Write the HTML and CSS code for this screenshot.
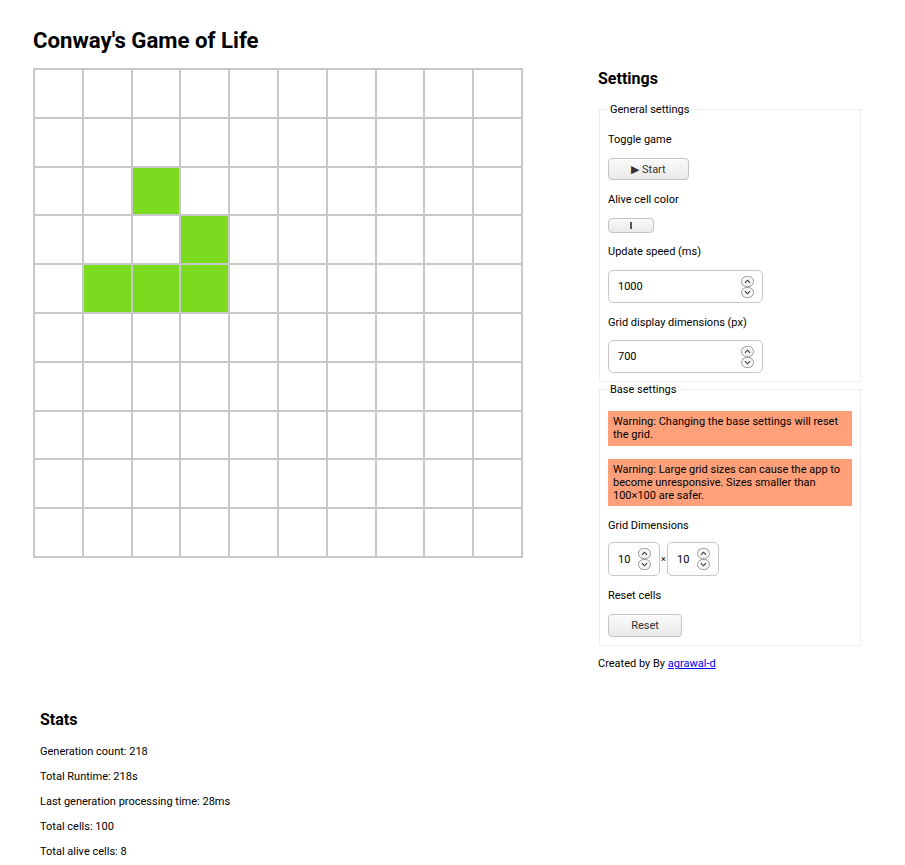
FILE: index.html
```html
<!DOCTYPE html>
<html lang="en">
<head>
<meta charset="utf-8">
<title>Conway's Game of Life</title>
<link rel="stylesheet" href="styles.css">
</head>
<body>
<div class="page">
  <h1 class="title">Conway's Game of Life</h1>
  <div class="main">
    <div class="board" id="board"></div>
    <aside class="settings">
      <h2 class="heading">Settings</h2>
      <fieldset class="group group-general">
        <legend class="legend">General settings</legend>
        <p class="label label-first">Toggle game</p>
        <button class="btn btn-start" type="button">▶ Start</button>
        <p class="label label-color">Alive cell color</p>
        <div class="color-btn"><span class="color-mark"></span></div>
        <p class="label label-speed">Update speed (ms)</p>
        <div class="num num-wide"><span class="num-val">1000</span><span class="spin"><span class="spin-b"><svg viewBox="0 0 8 5" width="7" height="5"><path d="M1 4 L4 1 L7 4" fill="none" stroke="#333" stroke-width="1.2"/></svg></span><span class="spin-b"><svg viewBox="0 0 8 5" width="7" height="5"><path d="M1 1 L4 4 L7 1" fill="none" stroke="#333" stroke-width="1.2"/></svg></span></span></div>
        <p class="label label-display">Grid display dimensions (px)</p>
        <div class="num num-wide"><span class="num-val">700</span><span class="spin"><span class="spin-b"><svg viewBox="0 0 8 5" width="7" height="5"><path d="M1 4 L4 1 L7 4" fill="none" stroke="#333" stroke-width="1.2"/></svg></span><span class="spin-b"><svg viewBox="0 0 8 5" width="7" height="5"><path d="M1 1 L4 4 L7 1" fill="none" stroke="#333" stroke-width="1.2"/></svg></span></span></div>
      </fieldset>
      <fieldset class="group group-base">
        <legend class="legend">Base settings</legend>
        <p class="warning">Warning: Changing the base settings will reset the grid.</p>
        <p class="warning">Warning: Large grid sizes can cause the app to become unresponsive. Sizes smaller than 100×100 are safer.</p>
        <p class="label label-dims">Grid Dimensions</p>
        <div class="dims"><div class="num num-small"><span class="num-val">10</span><span class="spin"><span class="spin-b"><svg viewBox="0 0 8 5" width="7" height="5"><path d="M1 4 L4 1 L7 4" fill="none" stroke="#333" stroke-width="1.2"/></svg></span><span class="spin-b"><svg viewBox="0 0 8 5" width="7" height="5"><path d="M1 1 L4 4 L7 1" fill="none" stroke="#333" stroke-width="1.2"/></svg></span></span></div><span class="times">×</span><div class="num num-small"><span class="num-val">10</span><span class="spin"><span class="spin-b"><svg viewBox="0 0 8 5" width="7" height="5"><path d="M1 4 L4 1 L7 4" fill="none" stroke="#333" stroke-width="1.2"/></svg></span><span class="spin-b"><svg viewBox="0 0 8 5" width="7" height="5"><path d="M1 1 L4 4 L7 1" fill="none" stroke="#333" stroke-width="1.2"/></svg></span></span></div></div>
        <p class="label label-reset">Reset cells</p>
        <button class="btn btn-reset" type="button">Reset</button>
      </fieldset>
      <p class="credit">Created by By <a href="#">agrawal-d</a></p>
    </aside>
  </div>
  <section class="stats">
    <h2 class="heading">Stats</h2>
    <p class="stat">Generation count: 218</p>
    <p class="stat">Total Runtime: 218s</p>
    <p class="stat">Last generation processing time: 28ms</p>
    <p class="stat">Total cells: 100</p>
    <p class="stat">Total alive cells: 8</p>
  </section>
</div>
<script>
  (function () {
    var alive = { "2,2": 1, "3,3": 1, "4,1": 1, "4,2": 1, "4,3": 1 };
    var board = document.getElementById("board");
    for (var r = 0; r < 10; r++) {
      for (var c = 0; c < 10; c++) {
        var d = document.createElement("div");
        d.className = alive[r + "," + c] ? "cell alive" : "cell";
        board.appendChild(d);
      }
    }
  })();
</script>
</body>
</html>
```

FILE: styles.css
```css
* { box-sizing: border-box; }

body {
  margin: 0;
  font-family: Roboto, "Liberation Sans", sans-serif;
  color: #000;
  background: #fff;
}

.page {
  padding: 0 0 20px 33px;
}

.title {
  margin: 26px 0 14px;
  font-size: 22.2px;
  line-height: 28px;
  font-weight: 700;
}

.main {
  display: flex;
  align-items: flex-start;
  gap: 75px;
}

.board {
  width: 490px;
  height: 490px;
  border: 1px solid #c8c8c8;
  display: grid;
  grid-template-columns: repeat(10, 1fr);
  grid-template-rows: repeat(10, 1fr);
}

.cell {
  border: 1px solid #c8c8c8;
  background: #fff;
}

.cell.alive {
  background: #7bdc1f;
}

.settings {
  width: 264px;
  padding-top: 1px;
}

.heading {
  margin: 0;
  font-size: 16px;
  line-height: 20px;
  font-weight: 700;
}

.group {
  margin: 0 1px;
  padding: 6px 8px 8px;
  border: 1px solid #eeeeee;
  min-width: 0;
}

.group-general {
  margin-top: 14px;
}

.group-base {
  margin-top: 1px;
  padding-top: 5px;
}

.legend {
  padding: 0 2px;
  font-size: 11px;
  line-height: 13px;
}

.label {
  margin: 11px 0 12px;
  font-size: 11px;
  line-height: 13px;
}

.label-color { margin-top: 13px; margin-bottom: 12px; }
.label-speed { margin-top: 12px; margin-bottom: 12px; }
.label-display { margin-top: 13px; margin-bottom: 11px; }
.label-dims { margin-top: 13px; margin-bottom: 10px; }
.label-reset { margin-top: 13px; margin-bottom: 12px; }

.btn {
  display: flex;
  align-items: center;
  justify-content: center;
  height: 22px;
  padding: 0;
  white-space: nowrap;
  border: 1px solid #c4c4c4;
  border-radius: 4px;
  background: linear-gradient(#fafafa, #e9e9e9);
  font-family: inherit;
  font-size: 11px;
  color: #333;
}

.btn-start { width: 81px; }
.btn-reset { width: 74px; height: 23px; }

.color-btn {
  width: 46px;
  height: 15px;
  border: 1px solid #c4c4c4;
  border-radius: 4px;
  background: linear-gradient(#fafafa, #e9e9e9);
  display: flex;
  align-items: center;
  justify-content: center;
}

.color-mark {
  width: 2px;
  height: 7px;
  background: #555;
}

.num {
  height: 33px;
  border: 1px solid #c8c8c8;
  border-radius: 5px;
  display: flex;
  align-items: center;
  justify-content: space-between;
  padding: 0 8px 0 9px;
  font-size: 11px;
  background: #fff;
}

.num-wide { width: 155px; }
.num-small { width: 52px; height: 34px; padding-right: 8px; }

.spin {
  display: flex;
  flex-direction: column;
}

.spin-b {
  width: 13px;
  height: 11px;
  border: 1px solid #9a9a9a;
  border-radius: 6px;
  background: #f7f7f7;
  display: flex;
  align-items: center;
  justify-content: center;
}

.warning {
  margin: 10px 0 13px;
  padding: 4px 5px;
  background: #ffa07a;
  font-size: 11px;
  line-height: 13.3px;
}

.warning + .warning {
  margin-top: 13px;
}

.dims {
  display: flex;
  align-items: center;
}

.times {
  font-size: 9px;
  width: 7px;
  text-align: center;
}

.credit {
  margin: 11px 0 0;
  font-size: 11px;
  line-height: 13px;
}

.credit a {
  color: #0000ee;
}

.stats {
  margin-top: 40px;
  padding-left: 7px;
}

.stats .heading {
  margin-bottom: 15px;
}

.stat {
  margin: 11px 0;
  font-size: 11px;
  line-height: 14px;
}

.stats .heading + .stat { margin-top: 0; }
```
